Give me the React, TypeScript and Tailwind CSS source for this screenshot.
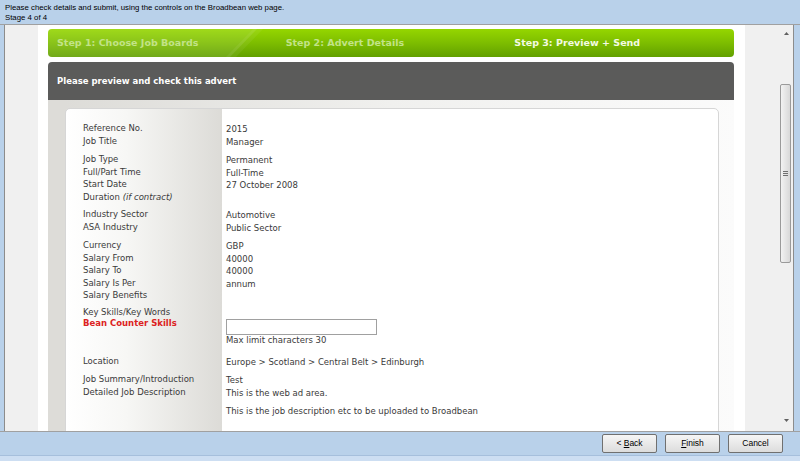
import React from "react";

type RowProps = { label: React.ReactNode; children?: React.ReactNode; labelClass?: string };

function Row({ label, children, labelClass }: RowProps) {
  return (
    <div className="flex">
      <div className={"w-[156px] shrink-0 pl-[17px] " + (labelClass ?? "")}>{label}</div>
      <div className="flex-1 pl-[4px] relative top-[1px]">{children}</div>
    </div>
  );
}

function Btn({ children }: { children: React.ReactNode }) {
  return (
    <div className="w-[55px] h-[19px] border border-[#707070] rounded-[2px] bg-gradient-to-b from-[#f6f6f6] to-[#dcdcdc] flex items-center justify-center text-[8.5px] text-black whitespace-pre">
      {children}
    </div>
  );
}

export default function App() {
  return (
    <div className="w-[800px] h-[461px] overflow-hidden flex flex-col bg-[#b9d1ea] font-['Liberation_Sans',Arial,sans-serif]">
      {/* top info bar */}
      <div className="h-[25px] shrink-0 pl-[5px] pt-[3px] text-[7.8px] leading-[9.5px] text-black border-b border-[#a0a0a0]">
        <div>Please check details and submit, using the controls on the Broadbean web page.</div>
        <div>Stage 4 of 4</div>
      </div>

      {/* window area */}
      <div className="h-[407px] shrink-0 flex border-b border-[#a0a0a0]">
        <div className="w-[4px] shrink-0" />
        <div className="w-[34px] shrink-0 bg-[#f0f0f0] border-l border-[#8c8c8c]" />
        <div className="w-[10px] shrink-0 bg-white" />

        {/* page content */}
        <div className="w-[686px] shrink-0 flex flex-col bg-white pt-[4px] overflow-hidden font-['DejaVu_Sans',Verdana,sans-serif]">
          <div className="relative h-[28px] shrink-0 rounded-[4px] bg-gradient-to-b from-[#95d600] via-[#7dbd00] to-[#62a000] overflow-hidden grid grid-cols-3 items-center text-[9.5px] font-bold">
            <svg className="absolute left-0 top-0" width="260" height="28" viewBox="0 0 260 28">
              <polygon points="0,0 209,0 182,28 0,28" fill="#ffffff" fillOpacity="0.1" />
              <polygon points="205,0 215,0 188,28 178,28" fill="#ffffff" fillOpacity="0.06" />
            </svg>
            <div className="relative pl-[9px] text-[#c2e388]">Step 1: Choose Job Boards</div>
            <div className="relative pl-[9px] text-[#c2e388]">Step 2: Advert Details</div>
            <div className="relative pl-[9px] text-[#f3fae3]">Step 3: Preview + Send</div>
          </div>

          <div className="mt-[5px] h-[38px] shrink-0 rounded-t-[4px] bg-[#5b5b5a] flex items-center pl-[9px] text-white text-[8.5px] font-bold">
            Please preview and check this advert
          </div>

          <div className="flex-1 flex bg-gradient-to-r from-[#dcdbd7] via-[#f0f0ee] to-[#fbfbfb]">
            <div className="w-[17px] shrink-0 bg-[#dddcd8]" />
            <div className="w-[654px] shrink-0 mt-[8px] self-start border border-[#d6d6d6] rounded-[5px] bg-[linear-gradient(to_right,#ffffff_0px,#f7f7f5_60px,#dcdbd7_156px,#ffffff_156px)] pt-[13px] pb-[20px] text-[8.5px] leading-[12.5px] text-[#3a3a3a]">
              <div>
                <Row label="Reference No.">2015</Row>
                <Row label="Job Title">Manager</Row>
              </div>
              <div className="mt-[6px]">
                <Row label="Job Type">Permanent</Row>
                <Row label="Full/Part Time">Full-Time</Row>
                <Row label="Start Date">27 October 2008</Row>
                <Row label={<>Duration <i>(if contract)</i></>} />
              </div>
              <div className="mt-[5px]">
                <Row label="Industry Sector">Automotive</Row>
                <Row label="ASA Industry">Public Sector</Row>
              </div>
              <div className="mt-[6px]">
                <Row label="Currency">GBP</Row>
                <Row label="Salary From">40000</Row>
                <Row label="Salary To">40000</Row>
                <Row label="Salary Is Per">annum</Row>
                <Row label="Salary Benefits" />
              </div>
              <div className="mt-[4px]">
                <Row label="Key Skills/Key Words" />
                <div className="flex -mt-[1px]">
                  <div className="w-[156px] shrink-0 pl-[17px] font-bold text-[#dc2222]">Bean Counter Skills</div>
                  <div className="flex-1 pl-[4px] pt-[2px]">
                    <div className="w-[151px] h-[16px] border border-[#a0a0a0] bg-white" />
                    <div className="mt-[-1px]">Max limit characters 30</div>
                  </div>
                </div>
              </div>
              <div className="mt-[8px]">
                <Row label="Location">Europe &gt; Scotland &gt; Central Belt &gt; Edinburgh</Row>
              </div>
              <div className="mt-[6px]">
                <Row label="Job Summary/Introduction">Test</Row>
                <Row label="Detailed Job Description">
                  <div>This is the web ad area.</div>
                  <div className="mt-[6px]">This is the job description etc to be uploaded to Broadbean</div>
                </Row>
              </div>
            </div>
            <div className="flex-1" />
          </div>
        </div>

        <div className="w-[11px] shrink-0 bg-white" />
        <div className="w-[34px] shrink-0 bg-[#f0f0f0]" />

        {/* scrollbar */}
        <div className="relative w-[14px] shrink-0 bg-[#f0f0f0]">
          <svg className="absolute left-[5px] top-[7px]" width="5" height="4" viewBox="0 0 5 4">
            <polygon points="2.5,0 5,3 0,3" fill="#606060" />
          </svg>
          <div className="absolute left-[1px] top-[59px] w-[11px] h-[179px] rounded-[2px] border border-[#9a9a9a] bg-gradient-to-r from-[#f2f2f2] to-[#d8d8d8] flex items-center justify-center">
            <div className="flex flex-col gap-[1px]">
              <div className="w-[5px] h-[1px] bg-[#707070]" />
              <div className="w-[5px] h-[1px] bg-[#707070]" />
              <div className="w-[5px] h-[1px] bg-[#707070]" />
            </div>
          </div>
          <svg className="absolute left-[5px] bottom-[8px]" width="5" height="4" viewBox="0 0 5 4">
            <polygon points="0,0 5,0 2.5,3" fill="#606060" />
          </svg>
        </div>

        <div className="w-[7px] shrink-0 border-l border-[#8c8c8c]" />
      </div>

      {/* bottom button bar */}
      <div className="h-[24px] shrink-0 flex items-start justify-end gap-[8px] pr-[17px] pt-[2px] border-b border-[#a6bfdc]">
        <Btn>{"< "}<u>B</u>ack</Btn>
        <Btn><u>F</u>inish</Btn>
        <Btn>Cancel</Btn>
      </div>
      <div className="flex-1 bg-[#cddef2]" />
    </div>
  );
}
